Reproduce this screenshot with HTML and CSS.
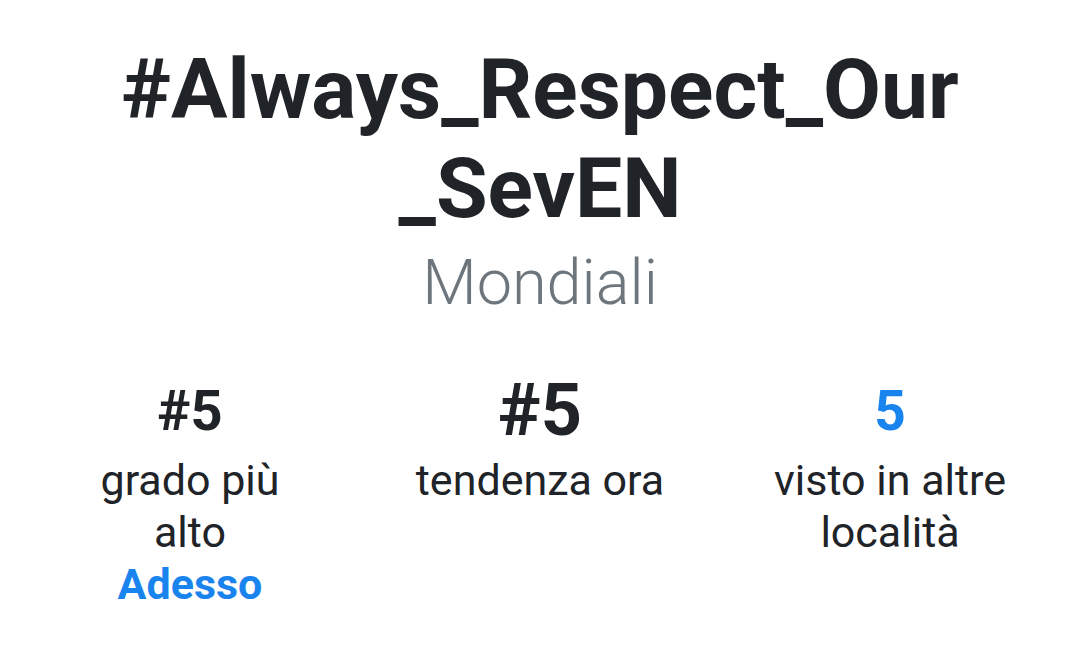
FILE: index.html
```html
<!DOCTYPE html>
<html lang="it">

<head>
    <meta charset="UTF-8">
    <title>Tendenza</title>
    <link rel="stylesheet" href="styles.css">
</head>

<body>
    <div id="trend">
        <h1 class="trend_name">#Always_Respect_Our_SevEN</h1>
        <div class="trend_place">Mondiali</div>
        <ul class="stats">
            <li class="stat">
                <span class="stat_num num_small">#5</span>
                <span class="stat_label">grado più alto</span>
                <span class="stat_when">Adesso</span>
            </li>
            <li class="stat">
                <span class="stat_num num_big">#5</span>
                <span class="stat_label">tendenza ora</span>
            </li>
            <li class="stat">
                <span class="stat_num num_link">5</span>
                <span class="stat_label">visto in altre località</span>
            </li>
        </ul>
    </div>
</body>

</html>
```

FILE: styles.css
```css
* {
    margin: 0;
    padding: 0;
    list-style: none
}

body {
    background: #fff;
    font-family: Roboto, "Noto Sans", sans-serif;
    color: #202327;
}

#trend {
    padding-top: 40px;
    text-align: center;
}

.trend_name {
    width: 860px;
    margin: 0 auto;
    font-size: 84px;
    font-weight: 700;
    line-height: normal;
    word-break: break-all;
}

.trend_place {
    margin-top: 8px;
    font-size: 63px;
    font-weight: 300;
    line-height: normal;
    color: #6e767d;
}

.stats {
    display: grid;
    grid-template-columns: repeat(3, 1fr);
    padding: 0 15px;
    margin-top: 54px;
}

.stat {
    display: flex;
    flex-direction: column;
    align-items: center;
    padding: 0 49px;
}

.stat_num {
    font-weight: 700;
    line-height: 76px;
    margin-bottom: 5px;
}

.num_small {
    font-size: 56px;
}

.num_big {
    font-size: 72px;
}

.num_link {
    font-size: 55px;
    color: #1a84ee;
}

.stat_label {
    font-size: 43px;
    line-height: 52px;
}

.stat_when {
    font-size: 43px;
    line-height: 52px;
    font-weight: 700;
    color: #1a84ee;
}
```
